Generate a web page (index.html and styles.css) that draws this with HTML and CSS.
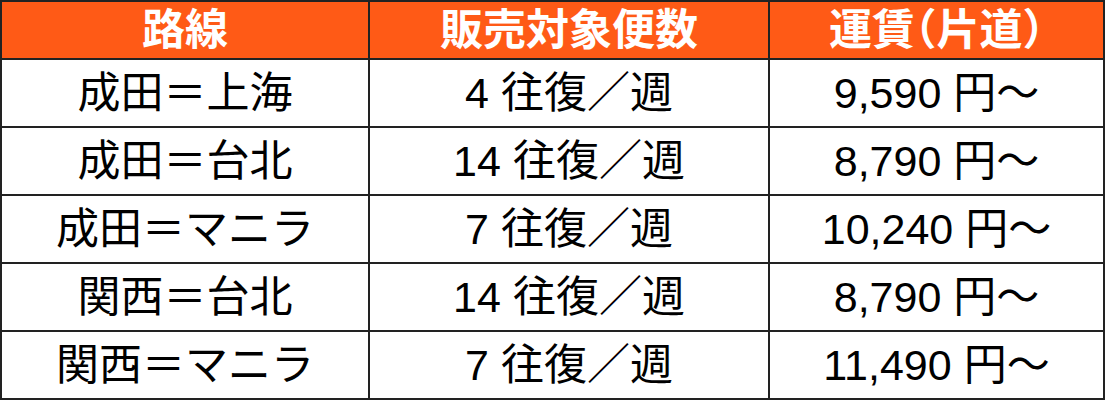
FILE: index.html
```html
<!DOCTYPE html>
<html lang="ja">
<head>
<meta charset="utf-8">
<title>路線表</title>
<link rel="stylesheet" href="styles.css">
</head>
<body>
<div class="fare-table">
  <div class="cell head">路線</div>
  <div class="cell head">販売対象便数</div>
  <div class="cell head">運賃（片道）</div>

  <div class="cell">成田＝上海</div>
  <div class="cell">4 往復／週</div>
  <div class="cell">9,590 円～</div>

  <div class="cell">成田＝台北</div>
  <div class="cell">14 往復／週</div>
  <div class="cell">8,790 円～</div>

  <div class="cell">成田＝マニラ</div>
  <div class="cell">7 往復／週</div>
  <div class="cell">10,240 円～</div>

  <div class="cell">関西＝台北</div>
  <div class="cell">14 往復／週</div>
  <div class="cell">8,790 円～</div>

  <div class="cell">関西＝マニラ</div>
  <div class="cell">7 往復／週</div>
  <div class="cell">11,490 円～</div>
</div>
</body>
</html>
```
FILE: styles.css
```css
* { box-sizing: border-box; }
html, body { margin: 0; padding: 0; background: #ffffff; }
body {
  font-family: "Liberation Sans", "Noto Sans CJK JP", sans-serif;
  color: #000000;
}
.fare-table {
  display: grid;
  grid-template-columns: 368px 400px 335px;
  grid-template-rows: 58px repeat(5, 68px);
  width: 1105px;
  border-top: 2px solid #222222;
  border-left: 2px solid #222222;
}
.cell {
  display: flex;
  align-items: center;
  justify-content: center;
  border-right: 2px solid #222222;
  border-bottom: 2px solid #222222;
  font-size: 43px;
  line-height: 1;
  white-space: nowrap;
}
.head {
  background: #ff5a16;
  color: #ffffff;
  font-weight: bold;
  font-feature-settings: "halt" 1;
}
```
